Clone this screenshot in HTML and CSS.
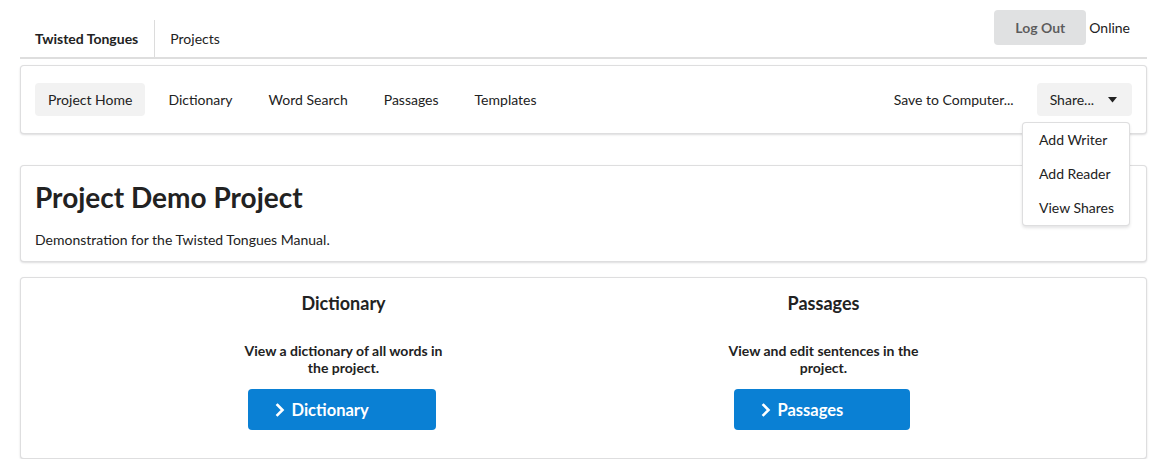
FILE: index.html
```html
<!DOCTYPE html>
<html>
<head>
<meta charset="utf-8">
<link rel="stylesheet" href="styles.css">
</head>
<body>
<div class="page">
  <header class="topbar">
    <nav class="tabs">
      <a class="tab tab-brand">Twisted Tongues</a>
      <a class="tab">Projects</a>
    </nav>
    <div class="session">
      <button class="btn-grey">Log Out</button>
      <span class="status">Online</span>
    </div>
  </header>

  <div class="card menu">
    <div class="menu-left">
      <a class="item active">Project Home</a>
      <a class="item">Dictionary</a>
      <a class="item">Word Search</a>
      <a class="item">Passages</a>
      <a class="item">Templates</a>
    </div>
    <div class="menu-right">
      <a class="item">Save to Computer...</a>
      <div class="dropdown">
        <a class="item active share">Share...
          <svg class="caret" width="9" height="6" viewBox="0 0 9 6"><path d="M0 0 L9 0 L4.5 5.5 Z" fill="#222"/></svg>
        </a>
        <div class="dropdown-menu">
          <div class="dd-item">Add Writer</div>
          <div class="dd-item">Add Reader</div>
          <div class="dd-item">View Shares</div>
        </div>
      </div>
    </div>
  </div>

  <section class="card intro">
    <h1 class="title">Project Demo Project</h1>
    <p class="desc">Demonstration for the Twisted Tongues Manual.</p>
  </section>

  <section class="card features">
    <div class="feature">
      <h3 class="feature-title">Dictionary</h3>
      <p class="feature-text">View a dictionary of all words in the project.</p>
      <button class="btn-blue btn-dict">
        <svg width="10" height="14" viewBox="0 0 10 14"><path d="M2.5 2 L7.5 7 L2.5 12" fill="none" stroke="#fff" stroke-width="2.6" stroke-linecap="square" stroke-linejoin="miter"/></svg>
        <span>Dictionary</span>
      </button>
    </div>
    <div class="feature">
      <h3 class="feature-title">Passages</h3>
      <p class="feature-text">View and edit sentences in the project.</p>
      <button class="btn-blue btn-pass">
        <svg width="10" height="14" viewBox="0 0 10 14"><path d="M2.5 2 L7.5 7 L2.5 12" fill="none" stroke="#fff" stroke-width="2.6" stroke-linecap="square" stroke-linejoin="miter"/></svg>
        <span>Passages</span>
      </button>
    </div>
  </section>
</div>
</body>
</html>
```
FILE: styles.css
```css
* { box-sizing: border-box; }
html, body { margin: 0; padding: 0; background: #fff; }
body {
  font-family: Lato, "Open Sans", Arial, sans-serif;
  font-size: 14px;
  color: rgba(0,0,0,0.87);
}
.page {
  padding: 0 24px 0 20px;
}
.topbar {
  display: flex;
  justify-content: space-between;
  align-items: flex-start;
  border-bottom: 2px solid #dedede;
  padding-top: 10px;
}
.tabs {
  display: flex;
  margin-top: 10px;
}
.tab {
  display: flex;
  align-items: center;
  height: 37px;
  padding: 0 16px 0 15px;
  color: #222;
  cursor: pointer;
}
.tab-brand {
  font-weight: 700;
  border-right: 1px solid #dcdcdc;
}
.session {
  display: flex;
  align-items: center;
  margin-right: 17px;
}
.btn-grey {
  font-family: inherit;
  font-size: 14px;
  font-weight: 700;
  color: rgba(0,0,0,0.6);
  background: #e0e1e2;
  border: 0;
  border-radius: 4px;
  width: 92px;
  height: 35px;
  padding: 0;
}
.status {
  margin-left: 3px;
  color: #222;
}
.card {
  background: #fff;
  border: 1px solid rgba(34,36,38,0.15);
  border-radius: 4px;
  box-shadow: 0 1px 2px 0 rgba(34,36,38,0.15);
}
.menu {
  margin-top: 6px;
  height: 69px;
  display: flex;
  justify-content: space-between;
  align-items: center;
  padding: 0 14px;
}
.menu-left, .menu-right {
  display: flex;
  align-items: center;
  gap: 10px;
}
.item {
  display: flex;
  align-items: center;
  height: 33px;
  padding: 0 13px;
  border-radius: 4px;
  color: #222;
  cursor: pointer;
  white-space: nowrap;
}
.item.active {
  background: #f2f2f2;
}
.share {
  padding-right: 15px;
}
.caret {
  margin-left: 14px;
}
.dropdown {
  position: relative;
}
.dropdown-menu {
  position: absolute;
  top: 39px;
  right: 2px;
  width: 108px;
  background: #fff;
  border: 1px solid rgba(34,36,38,0.15);
  border-radius: 4px;
  box-shadow: 0 2px 3px 0 rgba(34,36,38,0.12);
  z-index: 5;
}
.dd-item {
  height: 34px;
  line-height: 34px;
  padding: 0 16px;
  color: #222;
  white-space: nowrap;
}
.intro {
  margin-top: 31px;
  height: 97px;
  padding: 12px 14px 0;
}
.title {
  margin: 0;
  font-size: 28px;
  font-weight: 700;
  line-height: 38px;
  color: #222;
}
.desc {
  margin: 14px 0 0;
  line-height: 20px;
  color: #222;
}
.features {
  margin-top: 15px;
  height: 182px;
  display: flex;
  justify-content: center;
  padding: 14px;
}
.feature {
  width: 480px;
  display: flex;
  flex-direction: column;
  align-items: center;
}
.feature-title {
  margin: 0;
  font-size: 18px;
  font-weight: 700;
  line-height: 23px;
  color: #222;
}
.feature-text {
  margin: 27px 0 0;
  max-width: 212px;
  text-align: center;
  font-weight: 700;
  line-height: 17px;
  color: #222;
}
.btn-blue {
  margin-top: 13px;
  height: 41px;
  background: #0a80d4;
  color: #fff;
  border: 0;
  border-radius: 4px;
  font-family: inherit;
  font-size: 16.5px;
  font-weight: 700;
  display: flex;
  align-items: center;
  justify-content: flex-start;
  gap: 7px;
  padding: 0 0 0 27px;
  position: relative;
  left: -2px;
}
.btn-dict { width: 188px; }
.btn-pass { width: 176px; }
```
